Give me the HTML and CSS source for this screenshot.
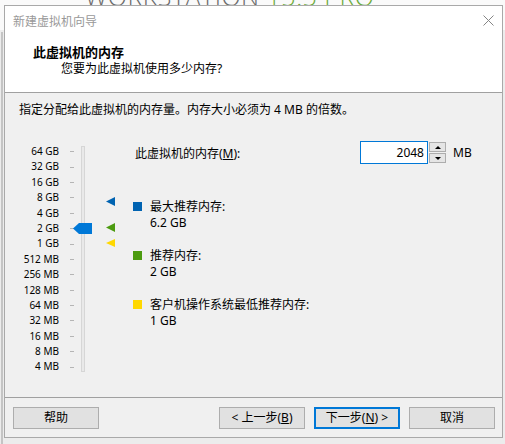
FILE: index.html
```html
<!DOCTYPE html>
<html lang="zh-CN">
<head>
<meta charset="utf-8">
<title>新建虚拟机向导</title>
<link rel="stylesheet" href="styles.css">
</head>
<body>
<div class="desk">
  <div class="brand">WORKSTATION <span class="ver">15.5 PRO</span></div>
  <div class="behind"></div>
  <div class="win">
    <div class="titlebar">
      <span class="title">新建虚拟机向导</span>
      <svg class="close" width="11" height="11" viewBox="0 0 11 11"><path d="M0.5 0.5 L10.5 10.5 M10.5 0.5 L0.5 10.5" stroke="#858585" stroke-width="1" fill="none"/></svg>
    </div>
    <div class="header">
      <div class="h1">此虚拟机的内存</div>
      <div class="h2">您要为此虚拟机使用多少内存?</div>
    </div>
    <div class="content">
      <p class="intro">指定分配给此虚拟机的内存量。内存大小必须为 4 MB 的倍数。</p>
      <div class="main">
        <div class="scale">
          <div class="row"><span class="lbl">64 GB</span><span class="tick"></span></div>
          <div class="row"><span class="lbl">32 GB</span><span class="tick"></span></div>
          <div class="row"><span class="lbl">16 GB</span><span class="tick"></span></div>
          <div class="row"><span class="lbl">8 GB</span><span class="tick"></span></div>
          <div class="row"><span class="lbl">4 GB</span><span class="tick"></span></div>
          <div class="row"><span class="lbl">2 GB</span><span class="tick"></span></div>
          <div class="row"><span class="lbl">1 GB</span><span class="tick"></span></div>
          <div class="row"><span class="lbl">512 MB</span><span class="tick"></span></div>
          <div class="row"><span class="lbl">256 MB</span><span class="tick"></span></div>
          <div class="row"><span class="lbl">128 MB</span><span class="tick"></span></div>
          <div class="row"><span class="lbl">64 MB</span><span class="tick"></span></div>
          <div class="row"><span class="lbl">32 MB</span><span class="tick"></span></div>
          <div class="row"><span class="lbl">16 MB</span><span class="tick"></span></div>
          <div class="row"><span class="lbl">8 MB</span><span class="tick"></span></div>
          <div class="row"><span class="lbl">4 MB</span><span class="tick"></span></div>
          <div class="track"></div>
          <div class="thumb"></div>
          <div class="marker m-max"></div>
          <div class="marker m-rec"></div>
          <div class="marker m-min"></div>
        </div>
        <div class="panel">
          <div class="memrow">
            <span class="memlbl">此虚拟机的内存(<u>M</u>):</span>
            <span class="input">2048</span>
            <span class="spin">
              <span class="sbtn"><span class="up"></span></span>
              <span class="sbtn"><span class="down"></span></span>
            </span>
            <span class="unit">MB</span>
          </div>
          <div class="legend">
            <div class="item"><span class="sq sq-max"></span><div class="txt">最大推荐内存:<br>6.2 GB</div></div>
            <div class="item"><span class="sq sq-rec"></span><div class="txt">推荐内存:<br>2 GB</div></div>
            <div class="item"><span class="sq sq-min"></span><div class="txt">客户机操作系统最低推荐内存:<br>1 GB</div></div>
          </div>
        </div>
      </div>
    </div>
    <div class="footer">
      <span class="btn">帮助</span>
      <span class="spacer"></span>
      <span class="btn">&lt; 上一步(<u>B</u>)</span>
      <span class="btn primary">下一步(<u>N</u>) &gt;</span>
      <span class="btn">取消</span>
    </div>
  </div>
</div>
</body>
</html>
```

FILE: styles.css
```css
html, body {
  margin: 0;
  padding: 0;
}
body {
  width: 505px;
  height: 444px;
  overflow: hidden;
  background: #ebebeb;
  font-family: "Noto Sans", "Noto Sans CJK SC", sans-serif;
  font-size: 12px;
  color: #000;
}
.desk {
  position: relative;
  width: 505px;
  height: 444px;
  background: linear-gradient(#fafafa 0, #fafafa 30px, #ececec 30px);
}
.brand {
  position: absolute;
  left: 85px;
  top: -16px;
  font-family: "Open Sans", "Noto Sans", sans-serif;
  font-weight: 300;
  font-size: 25px;
  line-height: 25px;
  color: #6b6b6b;
  white-space: nowrap;
  letter-spacing: 0.5px;
}
.ver {
  color: #6cab3a;
}
.behind {
  position: absolute;
  left: 1px;
  top: 32px;
  width: 2px;
  height: 412px;
  background: #c4c4c4;
}
.win {
  position: absolute;
  left: 4px;
  top: 5px;
  width: 499px;
  height: 433px;
  box-sizing: border-box;
  border: 1px solid #a9a9a9;
  background: #f0f0f0;
  display: flex;
  flex-direction: column;
}
.titlebar {
  height: 30px;
  flex: none;
  background: #fff;
  display: flex;
  align-items: center;
  justify-content: space-between;
  padding: 0 8px 0 8px;
}
.title {
  color: #999;
  font-size: 12px;
}
.close {
  display: block;
  margin-top: -1px;
}
.header {
  height: 56px;
  flex: none;
  background: #fff;
  border-bottom: 1px solid #a0a0a0;
  padding-left: 28px;
}
.h1 {
  padding-top: 8px;
  line-height: 16px;
  font-size: 13px;
  font-weight: bold;
}
.h2 {
  padding-left: 28px;
  line-height: 17px;
  font-size: 12px;
}
.content {
  flex: 1;
  padding-left: 14px;
}
.intro {
  margin: 0;
  padding-top: 8px;
  line-height: 17px;
}
.main {
  display: flex;
  margin-top: 23px;
}
.scale {
  position: relative;
  width: 114px;
  padding-top: 3px;
  flex: none;
}
.row {
  display: flex;
  align-items: center;
  height: 15.4px;
}
.lbl {
  width: 40px;
  text-align: right;
  font-size: 10px;
  line-height: 15.4px;
  white-space: nowrap;
}
.tick {
  width: 4px;
  height: 1px;
  margin-left: 11px;
  background: #b5b5b5;
}
.track {
  position: absolute;
  left: 62px;
  top: 5px;
  width: 4px;
  height: 226px;
  box-sizing: border-box;
  border: 1px solid #d6d6d6;
  background: #e9e9e9;
}
.thumb {
  position: absolute;
  left: 54px;
  top: 82px;
  width: 19px;
  height: 11px;
  background: #0078d7;
  clip-path: polygon(0 50%, 6px 0, 100% 0, 100% 100%, 6px 100%);
}
.marker {
  position: absolute;
  left: 87px;
  width: 9px;
  height: 9px;
  clip-path: polygon(0 50%, 100% 0, 100% 100%);
}
.m-max {
  top: 56px;
  background: #0063b1;
}
.m-rec {
  top: 82px;
  background: #4c9b10;
}
.m-min {
  top: 98px;
  height: 8px;
  background: #ffd800;
}
.panel {
  flex: 1;
}
.memrow {
  display: flex;
  align-items: center;
  height: 23px;
}
.memlbl {
  width: 225px;
  margin-left: 2px;
  white-space: nowrap;
}
.input {
  width: 68px;
  height: 23px;
  box-sizing: border-box;
  border: 1px solid #0078d7;
  background: #fff;
  text-align: right;
  padding-right: 3px;
  line-height: 21px;
}
.spin {
  display: flex;
  flex-direction: column;
  width: 17px;
  height: 21px;
  margin-left: 1px;
  gap: 1px;
}
.sbtn {
  flex: 1;
  box-sizing: border-box;
  border: 1px solid #adadad;
  background: #e5e5e5;
  display: flex;
  align-items: center;
  justify-content: center;
}
.up {
  width: 0;
  height: 0;
  border-left: 3px solid transparent;
  border-right: 3px solid transparent;
  border-bottom: 3px solid #000;
}
.down {
  width: 0;
  height: 0;
  border-left: 3px solid transparent;
  border-right: 3px solid transparent;
  border-top: 3px solid #000;
}
.unit {
  margin-left: 7px;
}
.legend {
  margin-top: 35px;
}
.item {
  display: flex;
  gap: 8px;
  margin-bottom: 17.8px;
}
.sq {
  width: 9px;
  height: 9px;
  margin-top: 3px;
  flex: none;
}
.sq-max { background: #0063b1; }
.sq-rec { background: #4c9b10; }
.sq-min { background: #ffd800; }
.txt {
  line-height: 15.6px;
}
.footer {
  height: 40px;
  flex: none;
  box-sizing: border-box;
  border-top: 1px solid #a0a0a0;
  padding: 9px 7px 8px 8px;
  display: flex;
  gap: 9px;
}
.spacer {
  flex: 1;
}
.btn {
  width: 86px;
  height: 22px;
  box-sizing: border-box;
  border: 1px solid #adadad;
  background: #e1e1e1;
  text-align: center;
  line-height: 20px;
  white-space: nowrap;
}
.btn.primary {
  border: 2px solid #0078d7;
  line-height: 18px;
}
```
